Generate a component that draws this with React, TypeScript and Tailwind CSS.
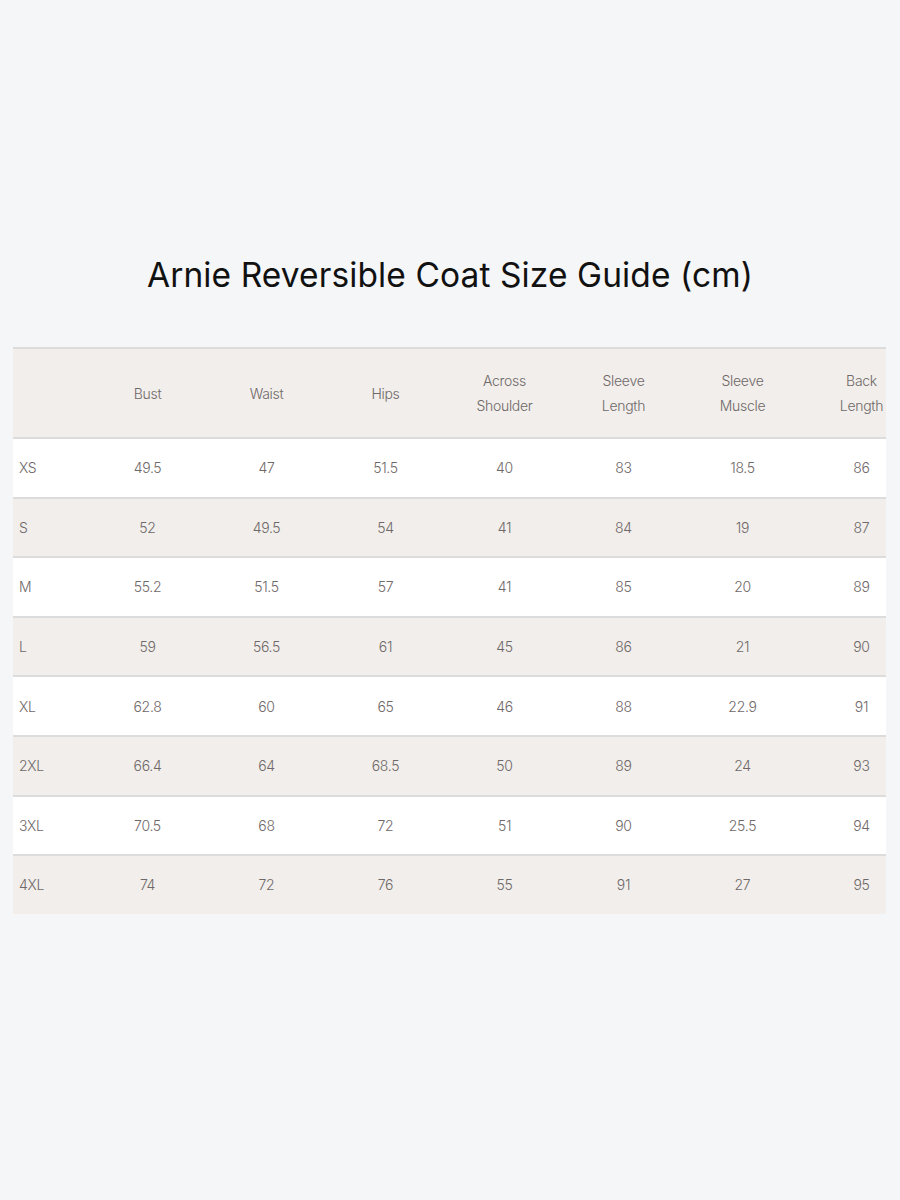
const headers = [
  ['Bust'],
  ['Waist'],
  ['Hips'],
  ['Across', 'Shoulder'],
  ['Sleeve', 'Length'],
  ['Sleeve', 'Muscle'],
  ['Back', 'Length'],
];

const rows = [
  ['XS', '49.5', '47', '51.5', '40', '83', '18.5', '86'],
  ['S', '52', '49.5', '54', '41', '84', '19', '87'],
  ['M', '55.2', '51.5', '57', '41', '85', '20', '89'],
  ['L', '59', '56.5', '61', '45', '86', '21', '90'],
  ['XL', '62.8', '60', '65', '46', '88', '22.9', '91'],
  ['2XL', '66.4', '64', '68.5', '50', '89', '24', '93'],
  ['3XL', '70.5', '68', '72', '51', '90', '25.5', '94'],
  ['4XL', '74', '72', '76', '55', '91', '27', '95'],
];

export default function App() {
  return (
    <div className="w-[900px] h-[1200px] bg-[#f5f6f8] pt-[252px]" style={{ fontFamily: 'Inter, "Noto Sans", sans-serif' }}>
      <h1 className="text-center text-[33.5px] leading-[46px] text-[#111] tracking-[0.1px]">
        Arnie Reversible Coat Size Guide (cm)
      </h1>

      <div className="mt-[49px] ml-[13px] w-[873px] overflow-hidden text-[14px] font-light text-[#6f6868] tracking-[-0.3px]">
        <div className="w-[912px]">
          {/* header */}
          <div className="flex h-[90px] items-center bg-[#f1eeeb] border-t-2 border-[#dcdcdc]">
            <div className="w-[75px]" />
            {headers.map((h, i) => (
              <div key={i} className="w-[119px] text-center leading-[25px]">
                {h.map((l) => (
                  <div key={l}>{l}</div>
                ))}
              </div>
            ))}
          </div>

          {rows.map((r, i) => (
            <div
              key={r[0]}
              className={`flex h-[59.6px] items-center border-t-2 border-[#dcdcdc] ${i % 2 === 0 ? 'bg-white' : 'bg-[#f1eeeb]'}`}
            >
              <div className="w-[75px] pl-[6px]">{r[0]}</div>
              {r.slice(1).map((v, j) => (
                <div key={j} className="w-[119px] text-center">{v}</div>
              ))}
            </div>
          ))}
        </div>
      </div>
    </div>
  );
}
